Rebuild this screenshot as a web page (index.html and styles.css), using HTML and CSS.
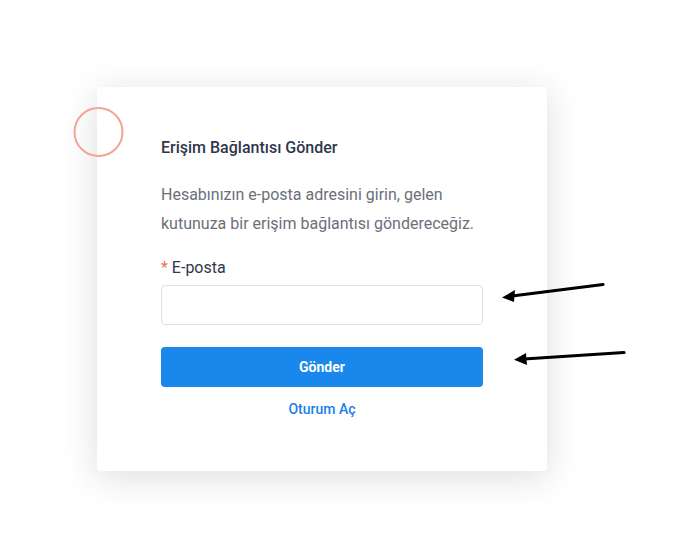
FILE: index.html
```html
<!DOCTYPE html>
<html lang="tr">
<head>
<meta charset="utf-8">
<title>Erişim Bağlantısı Gönder</title>
<link rel="stylesheet" href="styles.css">
</head>
<body>
<div class="page">
  <div class="card">
    <h1 class="title">Erişim Bağlantısı Gönder</h1>
    <p class="desc">Hesabınızın e-posta adresini girin, gelen kutunuza bir erişim bağlantısı göndereceğiz.</p>
    <label class="label"><span class="req">*</span> E-posta</label>
    <input class="input" type="text">
    <button class="btn">Gönder</button>
    <a class="link" href="#">Oturum Aç</a>
  </div>
</div>
<svg class="overlay" width="680" height="556" viewBox="0 0 680 556">
  <circle cx="98.5" cy="132" r="24" fill="none" stroke="#f4a396" stroke-width="2"/>
  <line x1="603" y1="284.5" x2="512" y2="296" stroke="#000" stroke-width="3.2" stroke-linecap="round"/>
  <polygon points="502,297.5 515,290 514,302" fill="#000"/>
  <line x1="624" y1="352.5" x2="524" y2="359" stroke="#000" stroke-width="3.2" stroke-linecap="round"/>
  <polygon points="514,359.8 526,353 527,365" fill="#000"/>
</svg>
</body>
</html>
```

FILE: styles.css
```css
* { box-sizing: border-box; }
html, body { margin: 0; padding: 0; background: #fff; }
body {
  font-family: Roboto, "Liberation Sans", sans-serif;
  width: 680px;
  height: 556px;
  position: relative;
  overflow: hidden;
}
.page {
  padding: 87px 0 0 97px;
}
.card {
  width: 450px;
  height: 384px;
  background: #fff;
  border-radius: 4px;
  box-shadow: 0 6px 34px rgba(40, 45, 60, 0.16);
  padding: 49px 64px 0 64px;
  display: flex;
  flex-direction: column;
}
.title {
  margin: 0;
  font-size: 16px;
  font-weight: 500;
  line-height: 24px;
  color: #30364a;
}
.desc {
  margin: 20px 0 0 0;
  font-size: 16px;
  line-height: 29px;
  color: #6b6f7a;
}
.label {
  margin-top: 19px;
  font-size: 16px;
  line-height: 22px;
  color: #30364a;
}
.req { color: #f56c6c; }
.input {
  margin-top: 6px;
  height: 40px;
  width: 322px;
  border: 1px solid #dfe1e8;
  border-radius: 4px;
  background: #fff;
  outline: none;
  padding: 0 12px;
  font: inherit;
}
.btn {
  margin-top: 22px;
  height: 40px;
  width: 322px;
  border: none;
  border-radius: 4px;
  background: #1a87ed;
  color: #fff;
  font-family: inherit;
  font-size: 14px;
  font-weight: 700;
  cursor: pointer;
}
.link {
  margin-top: 11px;
  text-align: center;
  font-size: 14px;
  line-height: 22px;
  font-weight: 500;
  color: #1a7fe9;
  text-decoration: none;
}
.overlay {
  position: absolute;
  left: 0;
  top: 0;
  pointer-events: none;
}
```
